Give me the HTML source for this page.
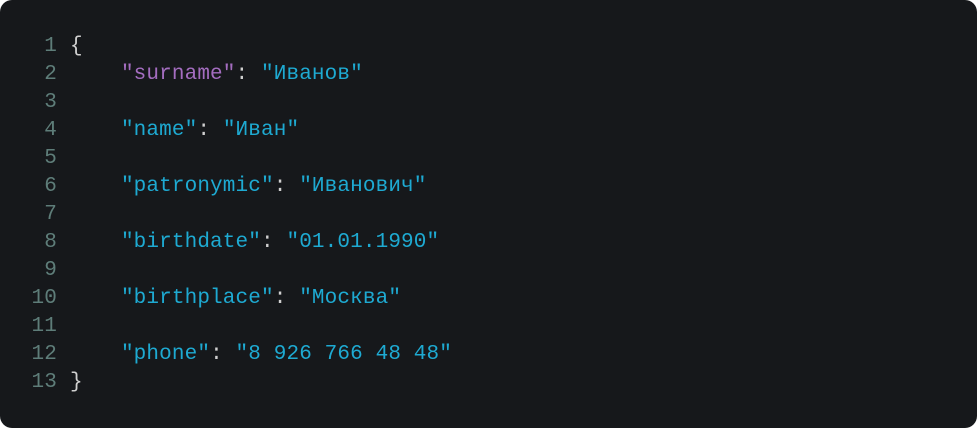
<!DOCTYPE html>
<html><head><meta charset="utf-8"><style>
html,body{margin:0;padding:0;background:#fff;width:977px;height:428px;overflow:hidden}
.box{position:absolute;left:0;top:0;width:977px;height:428px;background:#16181b;border-radius:12px}
pre{margin:0;position:absolute;left:0;top:33px;font-family:"Liberation Mono",monospace;font-size:21px;line-height:28px;color:#d0d0d0;letter-spacing:0.13px}
.n{display:inline-block;width:57px;text-align:right;color:#5e7d79;margin-right:13px}
.k{color:#a46dc0}.s{color:#1eaad2}.p{color:#d0d0d0}
</style></head><body><div class="box"><pre>
<span class="n">1</span>{
<span class="n">2</span>    <span class="k">"surname"</span>: <span class="s">"Иванов"</span>
<span class="n">3</span>
<span class="n">4</span>    <span class="s">"name"</span>: <span class="s">"Иван"</span>
<span class="n">5</span>
<span class="n">6</span>    <span class="s">"patronymic"</span>: <span class="s">"Иванович"</span>
<span class="n">7</span>
<span class="n">8</span>    <span class="s">"birthdate"</span>: <span class="s">"01.01.1990"</span>
<span class="n">9</span>
<span class="n">10</span>    <span class="s">"birthplace"</span>: <span class="s">"Москва"</span>
<span class="n">11</span>
<span class="n">12</span>    <span class="s">"phone"</span>: <span class="s">"8 926 766 48 48"</span>
<span class="n">13</span>}</pre></div></body></html>
